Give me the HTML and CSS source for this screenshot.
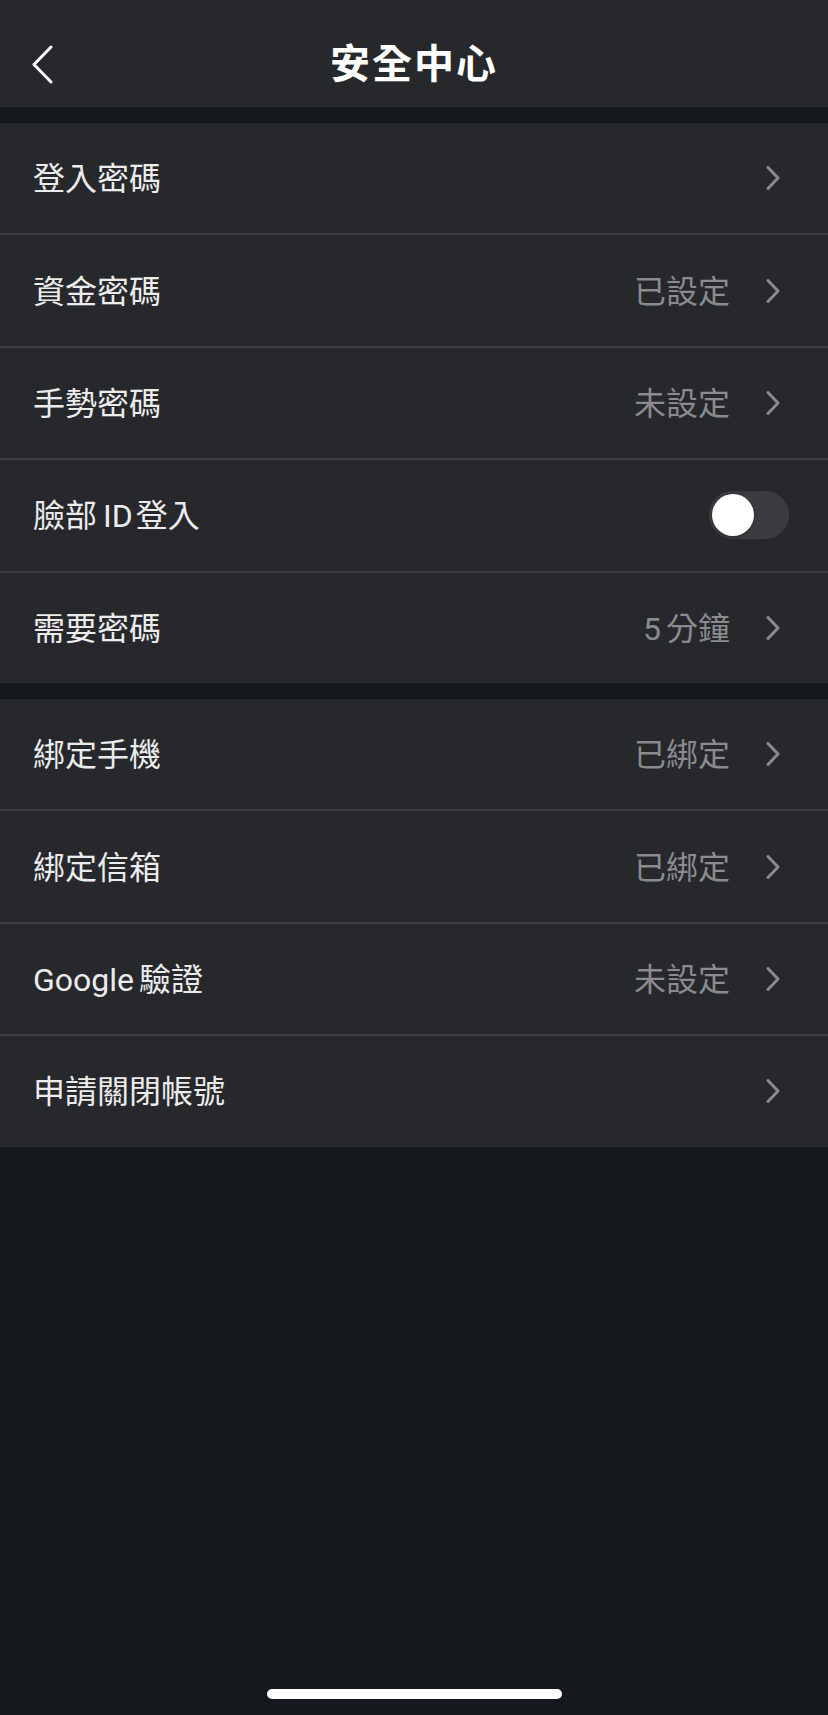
FILE: index.html
```html
<!DOCTYPE html>
<html lang="zh-Hant">
<head>
<meta charset="utf-8">
<title>安全中心</title>
<link rel="stylesheet" href="styles.css">
</head>
<body>
<div class="screen">
  <header class="topbar">
    <svg class="back" width="24" height="40" viewBox="0 0 24 40"><path d="M20 3 L3 20.5 L20 38" fill="none" stroke="#ffffff" stroke-width="3" stroke-linecap="round" stroke-linejoin="round"/></svg>
    <h1 class="title">安全中心</h1>
  </header>

  <section class="group">
    <div class="row"><span class="label">登入密碼</span><span class="value"></span><svg class="chev" width="23" height="24" viewBox="0 0 23 24"><path d="M2 1.5 L12 12 L2 22.5" fill="none" stroke="#8a8b8f" stroke-width="3" stroke-linecap="round" stroke-linejoin="round"/></svg></div>
    <div class="row"><span class="label">資金密碼</span><span class="value">已設定</span><svg class="chev" width="23" height="24" viewBox="0 0 23 24"><path d="M2 1.5 L12 12 L2 22.5" fill="none" stroke="#8a8b8f" stroke-width="3" stroke-linecap="round" stroke-linejoin="round"/></svg></div>
    <div class="row"><span class="label">手勢密碼</span><span class="value">未設定</span><svg class="chev" width="23" height="24" viewBox="0 0 23 24"><path d="M2 1.5 L12 12 L2 22.5" fill="none" stroke="#8a8b8f" stroke-width="3" stroke-linecap="round" stroke-linejoin="round"/></svg></div>
    <div class="row"><span class="label">臉部<span class="latin-mid">ID</span>登入</span><span class="toggle"><span class="knob"></span></span></div>
    <div class="row"><span class="label">需要密碼</span><span class="value"><span class="latin-end">5</span>分鐘</span><svg class="chev" width="23" height="24" viewBox="0 0 23 24"><path d="M2 1.5 L12 12 L2 22.5" fill="none" stroke="#8a8b8f" stroke-width="3" stroke-linecap="round" stroke-linejoin="round"/></svg></div>
  </section>

  <section class="group">
    <div class="row"><span class="label">綁定手機</span><span class="value">已綁定</span><svg class="chev" width="23" height="24" viewBox="0 0 23 24"><path d="M2 1.5 L12 12 L2 22.5" fill="none" stroke="#8a8b8f" stroke-width="3" stroke-linecap="round" stroke-linejoin="round"/></svg></div>
    <div class="row"><span class="label">綁定信箱</span><span class="value">已綁定</span><svg class="chev" width="23" height="24" viewBox="0 0 23 24"><path d="M2 1.5 L12 12 L2 22.5" fill="none" stroke="#8a8b8f" stroke-width="3" stroke-linecap="round" stroke-linejoin="round"/></svg></div>
    <div class="row"><span class="label"><span class="latin-end">Google</span>驗證</span><span class="value">未設定</span><svg class="chev" width="23" height="24" viewBox="0 0 23 24"><path d="M2 1.5 L12 12 L2 22.5" fill="none" stroke="#8a8b8f" stroke-width="3" stroke-linecap="round" stroke-linejoin="round"/></svg></div>
    <div class="row"><span class="label">申請關閉帳號</span><span class="value"></span><svg class="chev" width="23" height="24" viewBox="0 0 23 24"><path d="M2 1.5 L12 12 L2 22.5" fill="none" stroke="#8a8b8f" stroke-width="3" stroke-linecap="round" stroke-linejoin="round"/></svg></div>
  </section>

  <div class="spacer"></div>
  <div class="home-bar"></div>
</div>
</body>
</html>
```

FILE: styles.css
```css
* { box-sizing: border-box; }
html, body {
  margin: 0;
  padding: 0;
  background: #15181c;
}
body {
  font-family: Roboto, "Noto Sans CJK TC", "Noto Sans", sans-serif;
  color: #ececed;
}
.screen {
  width: 828px;
  height: 1715px;
  display: flex;
  flex-direction: column;
  background: #15181c;
}
.topbar {
  height: 107px;
  flex: none;
  background: #27282c;
  display: flex;
  align-items: center;
  justify-content: center;
  padding-top: 14px;
  position: relative;
}
.back {
  position: absolute;
  left: 31px;
  top: 44px;
}
.title {
  margin: 0;
  font-family: "Noto Sans CJK TC", sans-serif;
  font-size: 40px;
  font-weight: 700;
  letter-spacing: 2px;
  color: #ffffff;
  line-height: 1;
}
.group {
  margin-top: 16px;
  background: #27282c;
  display: flex;
  flex-direction: column;
}
.row {
  height: 110.4px;
  display: flex;
  align-items: center;
  padding: 0 39px 0 33px;
  box-sizing: content-box;
}
.row + .row {
  border-top: 2px solid #3c3d41;
}
.label {
  flex: 1;
  font-size: 32px;
  color: #ececed;
  line-height: 1;
  padding-top: 2px;
}
.latin-mid {
  margin: 0 3px 0 6px;
}
.latin-end {
  margin-right: 5px;
}
.value {
  font-size: 32px;
  color: #8a8b8f;
  line-height: 1;
  margin-right: 36px;
  padding-top: 2px;
}
.chev {
  display: block;
  flex: none;
}
.toggle {
  width: 80px;
  height: 48px;
  border-radius: 24px;
  background: #3b3c41;
  display: flex;
  align-items: center;
  padding: 0 3px;
}
.knob {
  width: 42px;
  height: 42px;
  border-radius: 50%;
  background: #ffffff;
  box-shadow: 0 1px 3px rgba(0,0,0,0.35);
}
.spacer { flex: 1; }
.home-bar {
  width: 295px;
  height: 10px;
  border-radius: 5px;
  background: #ffffff;
  margin: 0 auto 16px;
  flex: none;
}
```
